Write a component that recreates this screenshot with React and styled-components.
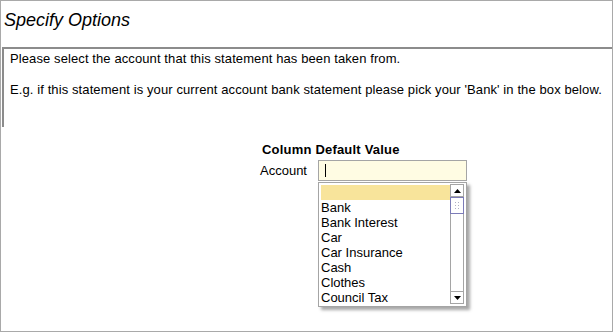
import React from 'react';
import styled, { createGlobalStyle } from 'styled-components';

const Global = createGlobalStyle`
  html, body { margin: 0; padding: 0; background: #fff; }
  body { font-family: "Liberation Sans", Arial, sans-serif; color: #000; }
  * { box-sizing: border-box; }
`;

const Frame = styled.div`
  width: 613px;
  height: 332px;
  border: 1px solid #a9a9a9;
  background: #fff;
  display: flex;
  flex-direction: column;
`;

const Title = styled.h1`
  margin: 0;
  height: 46px;
  padding: 9px 0 0 3px;
  font-size: 18px;
  line-height: 21px;
  font-style: italic;
  font-weight: normal;
`;

const Intro = styled.div`
  margin-left: 1px;
  height: 80px;
  border-top: 2px solid #8c8c8c;
  border-left: 2px solid #8c8c8c;
  padding: 2px 6px 0 6px;
  font-size: 13px;
  line-height: 15px;
  letter-spacing: 0.1px;
`;

const Para = styled.p`
  margin: 0 0 16px 0;
`;

const Form = styled.div`
  margin-top: 15px;
  padding-left: 259px;
  display: flex;
  flex-direction: column;
  gap: 3px;
  font-size: 13px;
  line-height: 15px;
`;

const FormTitle = styled.div`
  font-weight: bold;
  padding-left: 2px;
  letter-spacing: 0.2px;
`;

const Row = styled.div`
  display: flex;
  align-items: center;
`;

const Label = styled.div`
  width: 58px;
`;

const Field = styled.div`
  position: relative;
  width: 149px;
  height: 21px;
  border: 1px solid #a5a5a5;
  background: #fffce3;
  display: flex;
  align-items: center;
  padding-left: 6px;
`;

const Caret = styled.span`
  width: 1px;
  height: 13px;
  background: #000;
`;

const Dropdown = styled.div`
  position: absolute;
  left: -1px;
  top: 21px;
  width: 149px;
  height: 125px;
  border: 1px solid #a5a5a5;
  background: #fff;
  padding: 1px 2px 0 2px;
  display: flex;
  box-shadow: 3px 3px 3px rgba(0, 0, 0, 0.35);
  z-index: 2;
`;

const Items = styled.div`
  flex: 1;
  margin-top: 1px;
  display: flex;
  flex-direction: column;
  overflow: hidden;
`;

const Item = styled.div`
  height: 15px;
  line-height: 15px;
  white-space: nowrap;
  background: ${p => (p.$selected ? '#f8e49b' : 'transparent')};
`;

const Scrollbar = styled.div`
  width: 14px;
  height: 120px;
  border: 1px solid #a5a5a5;
  display: flex;
  flex-direction: column;
  background: #fff;
`;

const ScrollButton = styled.div`
  height: 12px;
  display: flex;
  align-items: center;
  justify-content: center;
  background: #fff;
  border-bottom: ${p => (p.$up ? '1px solid #a5a5a5' : 'none')};
  border-top: ${p => (p.$up ? 'none' : '1px solid #a5a5a5')};
`;

const Thumb = styled.div`
  height: 17px;
  margin: 0 -1px;
  border: 1px solid #7c7cb8;
  background-color: #fff;
  background-image: radial-gradient(circle, #b0b0c4 0.7px, transparent 0.8px);
  background-size: 3px 3px;
  background-clip: content-box;
  padding: 2px;
`;

const Track = styled.div`
  flex: 1;
`;

const Arrow = ({ up }) => (
  <svg width="7" height="4" viewBox="0 0 7 4">
    {up ? <path d="M0 4 L3.5 0 L7 4 Z" fill="#000" /> : <path d="M0 0 L7 0 L3.5 4 Z" fill="#000" />}
  </svg>
);

const options = ['', 'Bank', 'Bank Interest', 'Car', 'Car Insurance', 'Cash', 'Clothes', 'Council Tax'];

export default function App() {
  return (
    <>
      <Global />
      <Frame>
        <Title>Specify Options</Title>
        <Intro>
          <Para>Please select the account that this statement has been taken from.</Para>
          <Para>E.g. if this statement is your current account bank statement please pick your 'Bank' in the box below.</Para>
        </Intro>
        <Form>
          <FormTitle>Column Default Value</FormTitle>
          <Row>
            <Label>Account</Label>
            <Field>
              <Caret />
              <Dropdown>
                <Items>
                  {options.map((o, i) => (
                    <Item key={i} $selected={i === 0}>{o || '\u00a0'}</Item>
                  ))}
                </Items>
                <Scrollbar>
                  <ScrollButton $up><Arrow up /></ScrollButton>
                  <Thumb />
                  <Track />
                  <ScrollButton><Arrow /></ScrollButton>
                </Scrollbar>
              </Dropdown>
            </Field>
          </Row>
        </Form>
      </Frame>
    </>
  );
}
